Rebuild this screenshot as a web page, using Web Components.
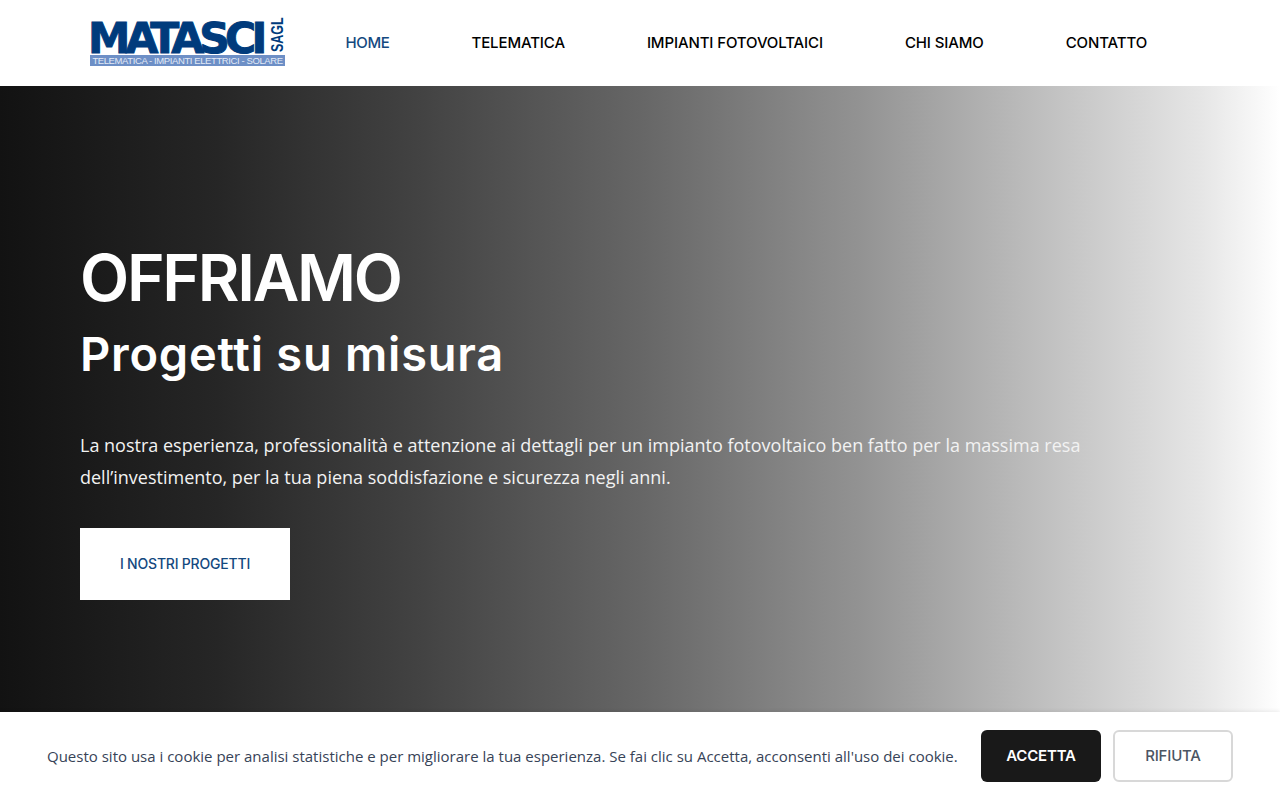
<!DOCTYPE html>
<html lang="it">
<head>
<meta charset="utf-8">
<title>Matasci Sagl</title>
<style>
  html, body { margin: 0; height: 100%; overflow: hidden; background: #fff; }
  body { display: flex; flex-direction: column; height: 800px; font-family: "Inter", sans-serif; }
  site-hero { flex: 1; }
</style>
</head>
<body>
<site-header>
  <nav-link active>HOME</nav-link>
  <nav-link>TELEMATICA</nav-link>
  <nav-link>IMPIANTI FOTOVOLTAICI</nav-link>
  <nav-link>CHI SIAMO</nav-link>
  <nav-link>CONTATTO</nav-link>
</site-header>
<site-hero>
  <span slot="title">OFFRIAMO</span>
  <span slot="subtitle">Progetti su misura</span>
  <span slot="text">La nostra esperienza, professionalità e attenzione ai dettagli per un impianto fotovoltaico ben fatto per la massima resa dell’investimento, per la tua piena soddisfazione e sicurezza negli anni.</span>
  <span slot="cta">I NOSTRI PROGETTI</span>
</site-hero>
<cookie-bar>Questo sito usa i cookie per analisi statistiche e per migliorare la tua esperienza. Se fai clic su Accetta, acconsenti all'uso dei cookie.</cookie-bar>

<script>
class SiteLogo extends HTMLElement {
  constructor() {
    super();
    const shadowRoot = this.attachShadow({ mode: 'open' });
    shadowRoot.innerHTML = `
      <style>
        :host {
          display: flex;
          flex-direction: column;
          flex: none;
          width: 195px;
          color: #003b7c;
        }
        .top { display: flex; justify-content: space-between; height: 32px; }
        .name {
          font: 700 42.5px/37px "DejaVu Sans", sans-serif;
          letter-spacing: -4.8px;
          margin-left: -2px;
          white-space: nowrap;
          -webkit-text-stroke: 1px #003b7c;
        }
        .kind {
          font: 700 12.5px/14px "Liberation Sans", sans-serif;
          writing-mode: vertical-rl;
          transform: rotate(180deg) scaleX(1.3);
          text-align: center;
          height: 32px;
        }
        .tag {
          margin-top: 3px;
          height: 11px;
          background: #6d8fc6;
          color: #e3eaf6;
          font: 400 9.5px/11px "Liberation Sans", sans-serif;
          letter-spacing: -0.4px;
          text-align: center;
          white-space: nowrap;
        }
      </style>
      <div class="top">
        <span class="name">MATASCI</span>
        <span class="kind">SAGL</span>
      </div>
      <div class="tag">TELEMATICA - IMPIANTI ELETTRICI - SOLARE</div>
    `;
  }
}

class SiteHeader extends HTMLElement {
  constructor() {
    super();
    const shadowRoot = this.attachShadow({ mode: 'open' });
    shadowRoot.innerHTML = `
      <style>
        :host {
          display: flex;
          align-items: center;
          height: 86px;
          padding-left: 90px;
          background: #fff;
          flex: none;
        }
        nav { display: flex; gap: 82px; margin-left: 60.5px; }
      </style>
      <site-logo></site-logo>
      <nav><slot></slot></nav>
    `;
  }
}

class NavLink extends HTMLElement {
  constructor() {
    super();
    const shadowRoot = this.attachShadow({ mode: 'open' });
    shadowRoot.innerHTML = `
      <style>
        :host {
          display: block;
          font: 500 15px/20px "Inter", sans-serif;
          letter-spacing: -0.12px;
          color: #000;
          white-space: nowrap;
        }
        :host([active]) { color: #14497f; letter-spacing: -0.35px; }
      </style>
      <slot></slot>
    `;
  }
}

class SiteHero extends HTMLElement {
  constructor() {
    super();
    const shadowRoot = this.attachShadow({ mode: 'open' });
    shadowRoot.innerHTML = `
      <style>
        :host {
          display: block;
          background: linear-gradient(90deg, #121212 0%, #262626 17%, #434343 33%, #666 50%, #929292 67%, #c4c4c4 83%, #e6e6e6 94%, #fff 100%);
          padding: 156px 80px 0;
          color: #fff;
        }
        h1, h2, p { margin: 0; }
        h1 { font: 600 64px/72px "Inter", sans-serif; letter-spacing: -2.25px; }
        h2 { font: 600 47px/60px "Inter", sans-serif; letter-spacing: 0.75px; margin-top: 10px; }
        p {
          font: 400 18px/32px "Open Sans", sans-serif;
          max-width: 1040px;
          margin-top: 45px;
          color: #f2f2f2;
        }
        a {
          display: flex;
          align-items: center;
          justify-content: center;
          width: 210px;
          height: 72px;
          margin-top: 35px;
          background: #fff;
          color: #14497f;
          font: 500 14px/20px "Inter", sans-serif;
          letter-spacing: -0.2px;
        }
      </style>
      <h1><slot name="title"></slot></h1>
      <h2><slot name="subtitle"></slot></h2>
      <p><slot name="text"></slot></p>
      <a><slot name="cta"></slot></a>
    `;
  }
}

class CookieBar extends HTMLElement {
  constructor() {
    super();
    const shadowRoot = this.attachShadow({ mode: 'open' });
    shadowRoot.innerHTML = `
      <style>
        :host {
          display: flex;
          align-items: center;
          flex: none;
          height: 88px;
          padding: 0 47px;
          background: #fff;
          box-shadow: 0 -1px 4px rgba(0, 0, 0, 0.08);
          position: relative;
        }
        p {
          flex: 1;
          margin: 0;
          font: 400 15px/20px "Open Sans", sans-serif;
          color: #374357;
        }
        .actions { display: flex; gap: 12px; }
        button {
          width: 120px;
          height: 52px;
          border-radius: 6px;
          font: 600 15px/20px "Inter", sans-serif;
          letter-spacing: -0.2px;
        }
        .yes { background: #191919; color: #fff; border: 0; }
        .no { background: #fff; color: #4b5563; border: 2px solid #d8d8d8; font-weight: 500; }
      </style>
      <p><slot></slot></p>
      <div class="actions">
        <button class="yes">ACCETTA</button>
        <button class="no">RIFIUTA</button>
      </div>
    `;
  }
}

customElements.define('site-logo', SiteLogo);
customElements.define('site-header', SiteHeader);
customElements.define('nav-link', NavLink);
customElements.define('site-hero', SiteHero);
customElements.define('cookie-bar', CookieBar);
</script>
</body>
</html>
